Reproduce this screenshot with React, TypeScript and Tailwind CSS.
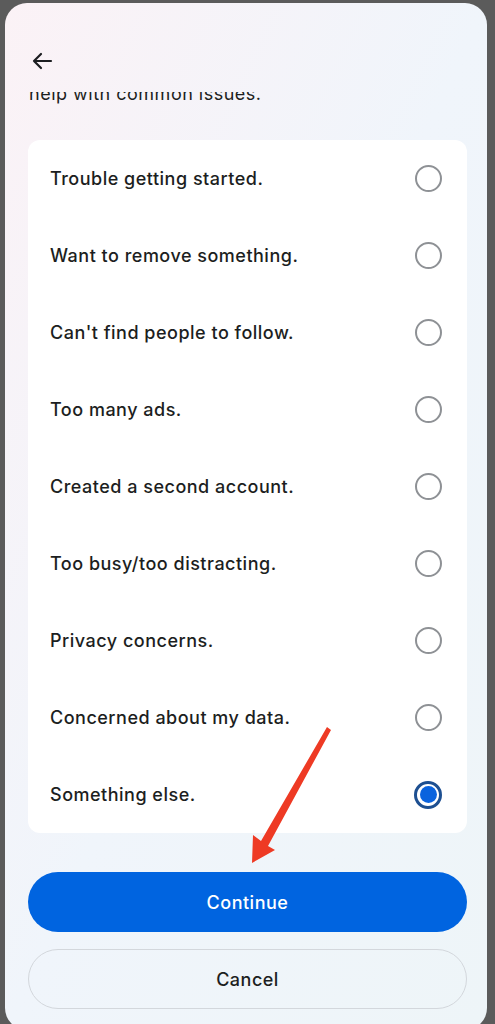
import type { ReactNode } from "react";

const reasons = [
	"Trouble getting started.",
	"Want to remove something.",
	"Can't find people to follow.",
	"Too many ads.",
	"Created a second account.",
	"Too busy/too distracting.",
	"Privacy concerns.",
	"Concerned about my data.",
	"Something else.",
];

function Radio({ checked }: { checked: boolean }) {
	if (checked) {
		return (
			<span className="flex size-[28px] items-center justify-center rounded-full border-[3px] border-[#1d4f91] bg-white">
				<span className="size-[17px] rounded-full bg-[#0a63de]" />
			</span>
		);
	}

	return <span className="block size-[27px] rounded-full border-2 border-[#8e9195]" />;
}

function ReasonRow({ label, checked }: { label: string; checked: boolean }) {
	return (
		<div className="flex h-[77px] items-center justify-between pl-[22px] pr-[25px]">
			<span className="text-[18px] font-medium tracking-[0.5px] text-[#1c1e21]">{label}</span>
			<Radio checked={checked} />
		</div>
	);
}

function PillButton({ primary, children }: { primary?: boolean; children: ReactNode }) {
	return (
		<button
			type="button"
			className={
				primary
					? "flex h-[60px] w-full items-center justify-center rounded-full bg-[#0064e0] text-[18px] font-medium tracking-[0.5px] text-white"
					: "flex h-[60px] w-full items-center justify-center rounded-full border border-[#d3d7dc] text-[18px] font-medium tracking-[0.5px] text-[#1c1e21]"
			}
		>
			{children}
		</button>
	);
}

export default function App() {
	return (
		<div
			className="h-[1024px] w-[495px] overflow-hidden bg-[#5b5b5b] pl-[5px] pr-[8px] pt-[3px]"
			style={{ fontFamily: "Inter, 'Noto Sans', sans-serif" }}
		>
			<div className="relative h-[1027px] rounded-[22px] bg-gradient-to-br from-[#fbf2f6] via-[#f0f5fb] to-[#eef5f8]">
				<div className="px-[25px] pt-[46px]">
					<svg width="24" height="24" viewBox="0 0 24 24" fill="none" stroke="#1c1e21" strokeWidth="2.2" strokeLinecap="round" strokeLinejoin="round">
						<path d="M21 12H4M11 5l-7 7 7 7" />
					</svg>
				</div>

				<div className="mt-[19px] h-[12px] overflow-hidden pl-[24px]">
					<p className="-mt-[8px] text-[18px] leading-[20px] tracking-[0.5px] text-[#1c1e21]">
						help with common issues.
					</p>
				</div>

				<div className="ml-[23px] mr-[20px] mt-[36px] rounded-[12px] bg-white">
					{reasons.map((reason, index) => (
						<ReasonRow
							key={reason}
							label={reason}
							checked={index === reasons.length - 1}
						/>
					))}
				</div>

				<div className="ml-[23px] mr-[20px] mt-[39px] flex flex-col gap-[17px]">
					<PillButton primary>Continue</PillButton>
					<PillButton>Cancel</PillButton>
				</div>

				<svg
					className="pointer-events-none absolute left-0 top-0"
					width="482"
					height="1021"
					viewBox="5 3 482 1021"
				>
					<polygon
						points="327,727 331,730 268,846 275,850 252,863 253,835 261,841"
						fill="#ee3a24"
					/>
				</svg>
			</div>
		</div>
	);
}
